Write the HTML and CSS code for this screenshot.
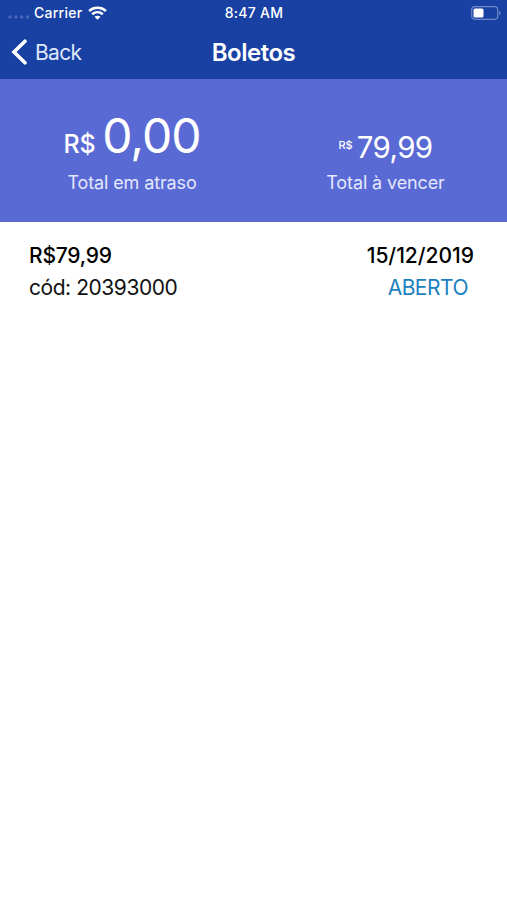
FILE: index.html
```
<!DOCTYPE html>
<html lang="pt-BR">
<head>
    <meta charset="UTF-8">
    <meta name="viewport" content="width=device-width, initial-scale=1.0">
    <title>Boletos</title>
    <link rel="stylesheet" href="styles.css">
</head>
<body>

<header class="header">
    <div class="status-bar">
        <div class="status-left">
            <svg class="signal" width="22" height="4" viewBox="0 0 22 4">
                <circle cx="2" cy="2" r="1.7"/>
                <circle cx="8" cy="2" r="1.7"/>
                <circle cx="13.7" cy="2" r="1.7"/>
                <circle cx="19.5" cy="2" r="1.7"/>
            </svg>
            <span class="carrier">Carrier</span>
            <svg class="wifi" width="19" height="14" viewBox="0 0 19 14">
                <path d="M1.1 5C5.8.8 13.2.8 17.9 5M4.2 8.2c3.1-2.7 7.5-2.7 10.6 0" fill="none" stroke="#fff" stroke-width="2.5"/>
                <path d="M6.5 10.8c1.8-1.5 4.2-1.5 6 0l-3 3z" fill="#fff"/>
            </svg>
        </div>
        <span class="time">8:47 AM</span>
        <svg class="battery" width="30" height="14" viewBox="0 0 30 14">
            <rect x=".7" y=".7" width="26" height="12.6" rx="3.2" fill="none" stroke="#7089c8" stroke-width="1.2"/>
            <rect x="2.5" y="2.4" width="10" height="9.2" rx="1.5" fill="#fff"/>
            <path d="M28 4.8c2 .8 2 3.6 0 4.4z" fill="#7089c8"/>
        </svg>
    </div>
    <div class="nav-bar">
        <a class="back">
            <svg width="16" height="26" viewBox="0 0 16 26">
                <path d="M14 2.2L3 13l11 10.8" fill="none" stroke="#fff" stroke-width="3.6" stroke-linecap="round"/>
            </svg>
            <span>Back</span>
        </a>
        <h1 class="title">Boletos</h1>
    </div>
</header>

<section class="summary">
    <div class="total overdue">
        <p class="amount"><span class="currency">R$</span><span class="value">0,00</span></p>
        <p class="label">Total em atraso</p>
    </div>
    <div class="total upcoming">
        <p class="amount"><span class="currency">R$</span><span class="value">79,99</span></p>
        <p class="label">Total à vencer</p>
    </div>
</section>

<main class="boleto">
    <div class="boleto-info">
        <p class="price">R$79,99</p>
        <p class="code">cód: 20393000</p>
    </div>
    <div class="boleto-status">
        <p class="date">15/12/2019</p>
        <p class="state">ABERTO</p>
    </div>
</main>

</body>
</html>
```
FILE: styles.css
```
body {
    font-family: Inter, "Liberation Sans", sans-serif;
    margin: 0;
    background-color: #fff;
    color: #111;
}
p, h1 {
    margin: 0;
    white-space: nowrap;
}
.header {
    height: 79px;
    background-color: #1941a3;
    color: #fff;
}
.status-bar {
    display: grid;
    grid-template-columns: 1fr auto 1fr;
    align-items: center;
    height: 26px;
    padding: 0 6px 0 8px;
}
.status-left {
    display: flex;
    align-items: center;
}
.signal {
    fill: #4866b6;
    margin: 8px 4px 0 0;
}
.carrier, .time {
    font-size: 14px;
    font-weight: 500;
    line-height: 26px;
    letter-spacing: 0.25px;
}
.time {
    margin-right: 1px;
}
.carrier {
    width: 49px;
}
.wifi {
    margin-left: 5px;
}
.battery {
    justify-self: end;
}
.nav-bar {
    display: grid;
    grid-template-columns: 1fr auto 1fr;
    align-items: center;
    height: 52px;
    padding: 0 11px;
}
.back {
    display: flex;
    align-items: center;
    gap: 8px;
    font-size: 21px;
    letter-spacing: -0.7px;
    color: #dfe8fb;
}
.title {
    font-size: 24px;
    font-weight: 600;
    letter-spacing: -0.5px;
}

/* totals */
.summary {
    display: flex;
    height: 143px;
    background-color: #5a6ad4;
    color: #fff;
}
.total {
    display: flex;
    flex-direction: column;
    align-items: center;
}
.overdue {
    width: 264px;
}
.upcoming {
    width: 243px;
}
.amount {
    display: flex;
    align-items: baseline;
    height: 62px;
    margin-top: 30px;
}
.overdue .currency {
    font-size: 25px;
    font-weight: 500;
    letter-spacing: -0.3px;
    margin-right: 7px;
}
.overdue .value {
    font-size: 48px;
    font-weight: 400;
    line-height: 54px;
    letter-spacing: -1px;
}
.upcoming .amount {
    align-items: flex-start;
}
.upcoming .currency {
    font-size: 11px;
    font-weight: 500;
    line-height: 14px;
    margin: 29px 4px 0 0;
}
.upcoming .value {
    font-size: 29.5px;
    font-weight: 400;
    line-height: 36px;
    letter-spacing: -0.6px;
    margin-top: 20px;
}
.label {
    font-size: 18px;
    line-height: 24px;
    letter-spacing: -0.12px;
    color: #e3e8fc;
}

/* list item */
.boleto {
    display: flex;
    justify-content: space-between;
    padding: 18px 33px 0 29px;
    font-size: 21px;
    line-height: 32px;
}
.price, .date {
    font-weight: 500;
    color: #000;
}
.price {
    letter-spacing: -0.2px;
}
.code {
    letter-spacing: -0.45px;
}
.boleto-status {
    text-align: right;
}
.state {
    padding-right: 6px;
    letter-spacing: -0.5px;
    color: #1b7fc0;
}
```
